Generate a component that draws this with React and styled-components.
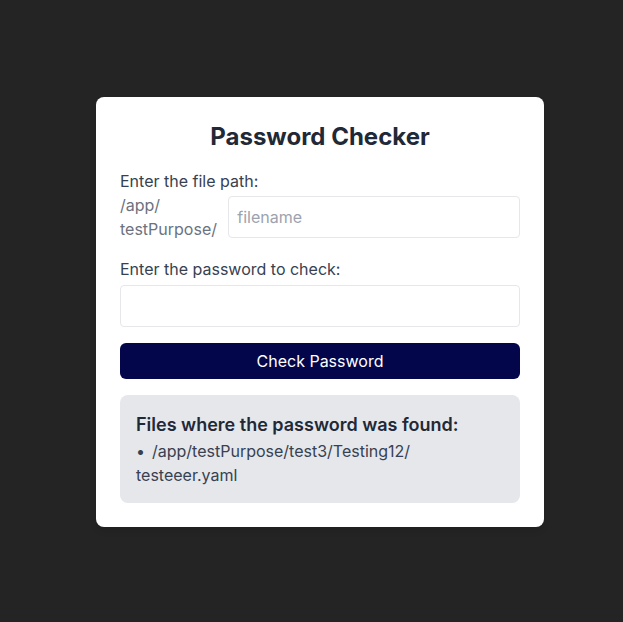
import { Fragment } from 'react';
import styled, { createGlobalStyle } from 'styled-components';

const GlobalStyle = createGlobalStyle`
  html, body {
    margin: 0;
    padding: 0;
    background: #242424;
    overflow: hidden;
  }
  * {
    box-sizing: border-box;
  }
  body {
    font-family: Inter, "Noto Sans", sans-serif;
  }
`;

const Page = styled.div`
  min-height: 622px;
  padding: 2px 0 0 17px;
  display: flex;
  justify-content: center;
  align-items: center;
`;

const Card = styled.div`
  width: 448px;
  background: #ffffff;
  border-radius: 8px;
  padding: 24px;
  display: flex;
  flex-direction: column;
  gap: 16px;
  box-shadow: 0 4px 6px rgba(0, 0, 0, 0.1);
`;

const Title = styled.h1`
  margin: 0;
  font-size: 24px;
  line-height: 32px;
  font-weight: 700;
  text-align: center;
  color: #1f2937;
`;

const Field = styled.div`
  display: flex;
  flex-direction: column;
  gap: ${({ $gap }) => $gap || 0}px;
`;

const Label = styled.label`
  font-size: 16px;
  line-height: 24px;
  color: #374151;
`;

const PathRow = styled.div`
  display: flex;
  align-items: center;
  gap: 10px;
`;

const Prefix = styled.span`
  font-size: 16px;
  line-height: 24px;
  color: #6b7280;
`;

const Input = styled.input`
  width: 100%;
  height: 42px;
  padding: 8px;
  font-family: inherit;
  font-size: 16px;
  color: #1f2937;
  border: 1px solid #e5e7eb;
  border-radius: 4px;
  outline: none;
  &::placeholder {
    color: #9ca3af;
  }
`;

const Button = styled.button`
  height: 36px;
  border: none;
  border-radius: 6px;
  background: #03064a;
  color: #ffffff;
  font-family: inherit;
  font-size: 16px;
  cursor: pointer;
`;

const Result = styled.div`
  background: #e5e7eb;
  border-radius: 8px;
  padding: 16px;
`;

const ResultTitle = styled.h2`
  margin: 0;
  font-size: 18px;
  line-height: 28px;
  font-weight: 600;
  color: #1f2937;
`;

const List = styled.ul`
  margin: 0;
  padding: 0;
  list-style: none;
`;

const Item = styled.li`
  font-size: 16px;
  line-height: 24px;
  color: #374151;
  &::before {
    content: '•';
    margin-right: 7px;
  }
`;

// allow a line break after each slash, like a path
function Path({ value }) {
  const parts = value.split('/');
  return parts.map((p, i) => (
    <Fragment key={i}>
      {p}
      {i < parts.length - 1 && (
        <>
          /<wbr />
        </>
      )}
    </Fragment>
  ));
}

export default function App() {
  const files = ['/app/testPurpose/test3/Testing12/testeeer.yaml'];

  return (
    <>
      <GlobalStyle />
      <Page>
        <Card>
          <Title>Password Checker</Title>
          <Field>
            <Label>Enter the file path:</Label>
            <PathRow>
              <Prefix>
                <Path value="/app/testPurpose/" />
              </Prefix>
              <Input placeholder="filename" />
            </PathRow>
          </Field>
          <Field $gap={4}>
            <Label>Enter the password to check:</Label>
            <Input type="password" />
          </Field>
          <Button>Check Password</Button>
          <Result>
            <ResultTitle>Files where the password was found:</ResultTitle>
            <List>
              {files.map((f) => (
                <Item key={f}>
                  <Path value={f} />
                </Item>
              ))}
            </List>
          </Result>
        </Card>
      </Page>
    </>
  );
}
